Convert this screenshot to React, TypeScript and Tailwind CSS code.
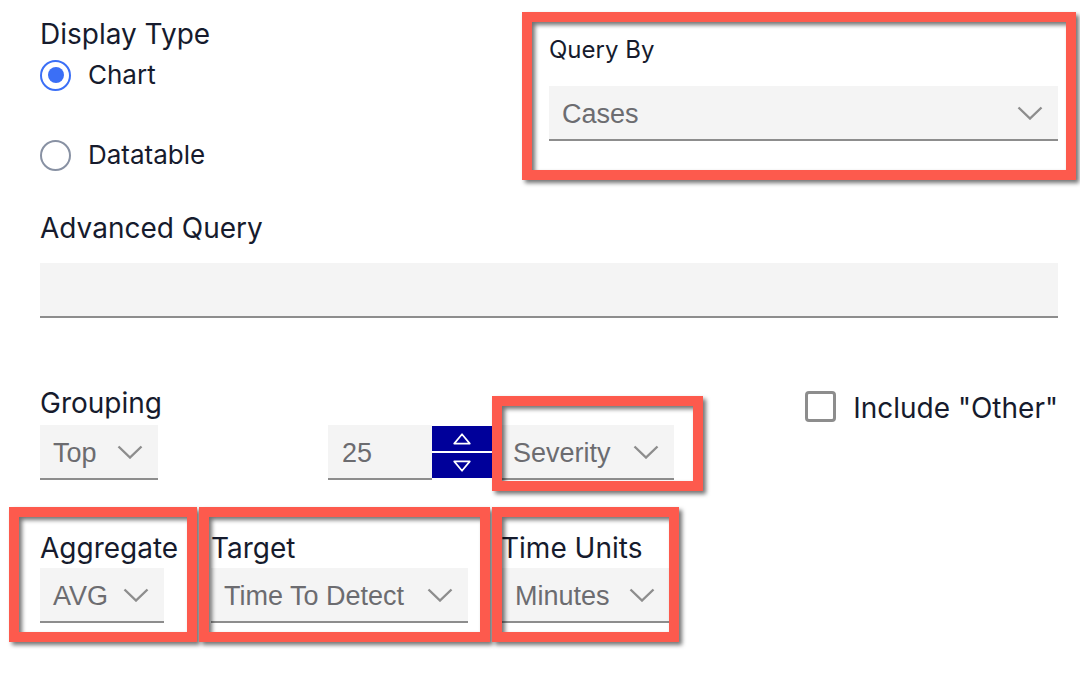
import type { ReactNode } from "react";

const label = "font-['Inter','Noto_Sans',sans-serif] text-[#161b2d]";
const value = "mt-[3px] font-['Liberation_Sans','Arial',sans-serif] text-[27px] text-[#6c6c70]";

function Chevron() {
  return (
    <svg width="26" height="14" viewBox="0 0 26 14" fill="none" className="mt-[1px] shrink-0">
      <path d="M1.5 1.5 L13 12.5 L24.5 1.5" stroke="#8d8d8d" strokeWidth="2.4" />
    </svg>
  );
}

function Select({ text, width }: { text: string; width: string }) {
  return (
    <div
      className={`flex h-[55px] items-center justify-between border-b-2 border-[#8d8d8d] bg-[#f4f4f4] pl-[13px] pr-[15px] ${width}`}
    >
      <span className={value}>{text}</span>
      <Chevron />
    </div>
  );
}

// red annotation frame drawn over a field
function Marked({ frame, className, children }: { frame: string; className?: string; children: ReactNode }) {
  return (
    <div className={`relative ${className ?? ""}`}>
      {children}
      <div
        className={`pointer-events-none absolute border-[10px] border-[#fd5a4d] [filter:drop-shadow(3px_3px_2px_rgba(0,0,0,0.55))] ${frame}`}
      />
    </div>
  );
}

function Radio({ checked, text }: { checked?: boolean; text: string }) {
  return (
    <div className="flex h-[40px] items-center gap-[17px]">
      <span
        className={`flex h-[31px] w-[31px] items-center justify-center rounded-full border-[2.5px] ${
          checked ? "border-[#3b6ff6]" : "border-[#8891a3]"
        }`}
      >
        {checked && <span className="h-[16px] w-[16px] rounded-full bg-[#3b6ff6]" />}
      </span>
      <span className={`${label} text-[26px] leading-[28px]`}>{text}</span>
    </div>
  );
}

export default function App() {
  return (
    <div className="h-[674px] w-[1080px] overflow-hidden bg-white pl-[40px] pr-[22px] pt-[20px]">
      {/* Display type + query by */}
      <div className="flex">
        <div className="flex-1">
          <div className={`${label} h-[28px] text-[28px] leading-[28px]`}>Display Type</div>
          <div className="mt-[7px]">
            <Radio checked text="Chart" />
          </div>
          <div className="mt-[40px]">
            <Radio text="Datatable" />
          </div>
        </div>
        <Marked className="mt-[16px] h-fit w-[509px]" frame="-left-[27px] -top-[24px] -right-[18px] -bottom-[39px]">
          <div className={`${label} h-[28px] text-[24px] leading-[28px]`}>Query By</div>
          <div className="mt-[22px]">
            <Select width="w-full" text="Cases" />
          </div>
        </Marked>
      </div>

      {/* Advanced query */}
      <div className={`${label} mt-[39px] h-[28px] text-[28px] leading-[28px]`}>Advanced Query</div>
      <div className="mt-[21px] h-[55px] w-full border-b-2 border-[#8d8d8d] bg-[#f4f4f4]" />

      {/* Grouping */}
      <div className="mt-[71px] flex justify-between">
        <div>
          <div className={`${label} h-[28px] text-[28px] leading-[28px]`}>Grouping</div>
          <div className="mt-[8px] flex items-start">
            <Select width="w-[118px]" text="Top" />
            <div className="ml-[170px] flex h-[55px] w-[104px] items-center border-b-2 border-[#8d8d8d] bg-[#f4f4f4] pl-[14px]">
              <span className={value}>25</span>
            </div>
            <div className="mt-[1px] flex h-[52px] w-[60px] flex-col gap-[2px]">
              <div className="flex flex-1 items-center justify-center bg-[#00009a]">
                <svg width="18" height="12" viewBox="0 0 18 12" fill="none">
                  <path d="M9 1.2 L16.8 10.6 H1.2 Z" stroke="white" strokeWidth="1.7" strokeLinejoin="round" />
                </svg>
              </div>
              <div className="flex flex-1 items-center justify-center bg-[#00009a]">
                <svg width="18" height="12" viewBox="0 0 18 12" fill="none">
                  <path d="M9 10.8 L16.8 1.4 H1.2 Z" stroke="white" strokeWidth="1.7" strokeLinejoin="round" />
                </svg>
              </div>
            </div>
            <Marked className="ml-[8px]" frame="-left-[8px] -top-[29px] -right-[29px] -bottom-[11px]">
              <Select width="w-[174px]" text="Severity" />
            </Marked>
          </div>
        </div>
        <div className="mt-[2px] flex h-[30px] items-center gap-[17px]">
          <span className="h-[31px] w-[31px] rounded-[4px] border-[3px] border-[#8d8d8d]" />
          <span className={`${label} mt-[4px] text-[28px] leading-[28px]`}>Include "Other"</span>
        </div>
      </div>

      {/* Aggregate / target / time units */}
      <div className="mt-[54px] flex">
        <Marked className="w-[171px]" frame="-left-[31px] -top-[27px] right-[14px] -bottom-[19px]">
          <div className={`${label} h-[28px] text-[28px] leading-[28px]`}>Aggregate</div>
          <div className="mt-[6px]">
            <Select width="w-[124px]" text="AVG" />
          </div>
        </Marked>
        <Marked className="w-[291px]" frame="-left-[12px] -top-[27px] right-[12px] -bottom-[19px]">
          <div className={`${label} h-[28px] text-[28px] leading-[28px]`}>Target</div>
          <div className="mt-[6px]">
            <Select width="w-[257px]" text="Time To Detect" />
          </div>
        </Marked>
        <Marked className="w-[170px]" frame="-left-[10px] -top-[27px] -right-[7px] -bottom-[19px]">
          <div className={`${label} -ml-[1px] h-[28px] text-[28px] leading-[28px]`}>Time Units</div>
          <div className="mt-[6px]">
            <Select width="w-[168px]" text="Minutes" />
          </div>
        </Marked>
      </div>
    </div>
  );
}
